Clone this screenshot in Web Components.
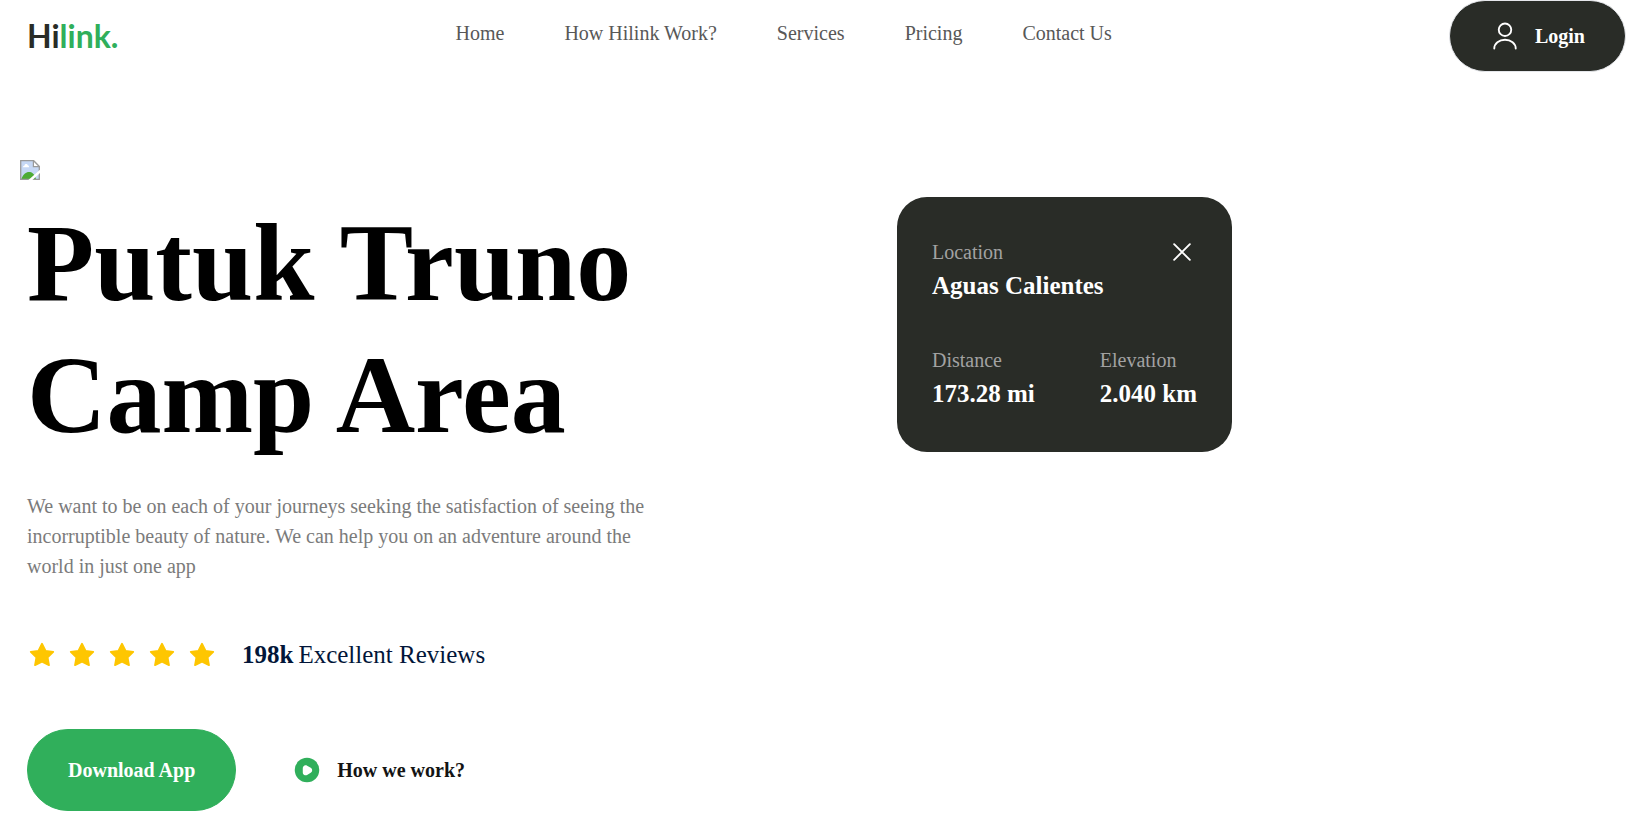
<!DOCTYPE html>
<html lang="en">
<head>
<meta charset="utf-8">
<meta name="viewport" content="width=device-width, initial-scale=1">
<title>Hilink</title>
<style>
  body {
    margin: 0;
    background: #fff;
    font-family: "Liberation Serif", "Times New Roman", serif;
    font-size: 20px;
    line-height: 30px;
  }
</style>
</head>
<body>
<hilink-header></hilink-header>
<hilink-hero></hilink-hero>

<script>
const define = (name, html) => {
  const template = document.createElement('template');
  template.innerHTML = html;
  customElements.define(name, class extends HTMLElement {
    constructor() {
      super();
      this.attachShadow({ mode: 'open' }).append(template.content.cloneNode(true));
    }
  });
};

define('hilink-logo', `
  <style>
    :host { display: block; }
    a {
      display: block;
      color: #292c27;
      font: 700 32px/40px Lato, "Noto Sans", sans-serif;
      text-decoration: none;
    }
    span { color: #30af5b; }
  </style>
  <a href="#">Hi<span>link.</span></a>
`);

define('hilink-button', `
  <style>
    :host { display: block; }
    button {
      display: flex;
      align-items: center;
      gap: 15px;
      margin: 0;
      padding: var(--pad, 25px) 40px;
      border: 1px solid var(--edge, #30af5b);
      border-radius: 50px;
      background: var(--fill, #30af5b);
      color: var(--ink, #fff);
      font: inherit;
      font-weight: 700;
      white-space: nowrap;
      cursor: pointer;
    }
    :host([variant="dark"]) { --pad: 20px; --fill: #292c27; --edge: #e5e7eb; }
    :host([variant="plain"]) { --fill: #fff; --edge: #fff; --ink: #141414; }
    ::slotted(svg) { display: block; width: 30px; height: 30px; }
  </style>
  <button type="button"><slot name="icon"></slot><slot></slot></button>
`);

define('hilink-header', `
  <style>
    :host { display: block; }
    header {
      display: flex;
      align-items: center;
      justify-content: space-between;
      padding: 0 7px 0 27px;
    }
    ul {
      display: flex;
      gap: 60px;
      margin: 0;
      padding: 0 0 6px;
      list-style: none;
    }
    li a { color: #585858; text-decoration: none; white-space: nowrap; }
  </style>
  <header>
    <hilink-logo></hilink-logo>
    <nav>
      <ul>
        <li><a href="#">Home</a></li>
        <li><a href="#">How Hilink Work?</a></li>
        <li><a href="#">Services</a></li>
        <li><a href="#">Pricing</a></li>
        <li><a href="#">Contact Us</a></li>
      </ul>
    </nav>
    <hilink-button variant="dark">
      <svg slot="icon" viewBox="0 0 24 24" fill="none" stroke="#fff" stroke-width="1.5" stroke-linecap="round" stroke-linejoin="round" aria-hidden="true">
        <circle cx="12" cy="7" r="5"/>
        <path d="M20.59 22C20.59 18.13 16.74 15 12 15S3.41 18.13 3.41 22"/>
      </svg>
      Login
    </hilink-button>
  </header>
`);

define('hilink-stat', `
  <style>
    :host { display: block; }
    dl, dd { margin: 0; }
    dt { color: #a2a2a2; }
    dd { color: #fff; font-size: 25px; line-height: 38px; font-weight: 700; white-space: nowrap; }
  </style>
  <dl><dt><slot name="label"></slot></dt><dd><slot></slot></dd></dl>
`);

define('location-card', `
  <style>
    :host {
      display: flex;
      flex-direction: column;
      gap: 40px;
      box-sizing: border-box;
      width: 335px;
      padding: 40px 35px 39px;
      border-radius: 30px;
      background: #292c27;
    }
    .row { display: flex; justify-content: space-between; align-items: flex-start; }
    button { margin: 0; padding: 0; border: 0; background: none; cursor: pointer; }
    svg { display: block; width: 30px; height: 30px; }
  </style>
  <div class="row">
    <hilink-stat><span slot="label">Location</span>Aguas Calientes</hilink-stat>
    <button type="button" aria-label="Close">
      <svg viewBox="0 0 24 24" fill="none" stroke="#fff" stroke-width="1.5" stroke-linecap="round" aria-hidden="true">
        <path d="M5.7 5.7 18.3 18.3M18.3 5.7 5.7 18.3"/>
      </svg>
    </button>
  </div>
  <div class="row">
    <hilink-stat><span slot="label">Distance</span>173.28 mi</hilink-stat>
    <hilink-stat><span slot="label">Elevation</span>2.040 km</hilink-stat>
  </div>
`);

define('star-icon', `
  <style>
    :host { display: block; }
    svg { display: block; width: 30px; height: 30px; }
  </style>
  <svg viewBox="0 0 24 24" fill="#fec601" stroke="#fec601" stroke-width="1.4" stroke-linejoin="round" aria-hidden="true">
    <path d="M12 3 14.8 8.6 21 9.5 16.5 13.9 17.6 20.1 12 17.4 6.4 20.1 7.5 13.9 3 9.5 9.2 8.6Z"/>
  </svg>
`);

define('hilink-reviews', `
  <style>
    :host { display: flex; align-items: center; gap: 25px; }
    .stars { display: flex; gap: 10px; }
    p { display: flex; gap: 5px; margin: 0; color: #021639; font-size: 25px; line-height: 38px; }
  </style>
  <div class="stars" role="img" aria-label="Five stars">
    <star-icon></star-icon><star-icon></star-icon><star-icon></star-icon><star-icon></star-icon><star-icon></star-icon>
  </div>
  <p><b>198k</b><span>Excellent Reviews</span></p>
`);

define('missing-picture', `
  <style>
    :host { display: block; }
    svg { display: block; width: 20px; height: 20px; }
  </style>
  <svg viewBox="0 0 20 20" role="img" aria-label="Picture not available">
    <path d="M.7.7H13.6L19.3 6.4V19.3H.7Z" fill="#c6d8f5"/>
    <path d="M3 7.3C3 5.8 4 5.5 4.5 5.4C4.8 3.6 7.4 3.5 7.8 5.3C9 5.4 9 6.3 9 7.3Z" fill="#fff"/>
    <path d="M1.3 19C3 14.5 6 12 9 12C12 12 14 13.5 16 19Z" fill="#4dab35"/>
    <path d="M.7.7H13.6L19.3 6.4V19.3H.7Z" fill="none" stroke="#9a9a9a" stroke-width="1.3"/>
    <path d="M13.4.7V6.6H19.3Z" fill="#fff" stroke="#9a9a9a" stroke-width="1.2"/>
    <path d="M20 9.8V13L12.4 20H8.4Z" fill="#fff"/>
  </svg>
`);

define('hilink-hero', `
  <style>
    :host { display: block; padding: 88px 7px 0 20px; }
    .columns {
      display: grid;
      grid-template-columns: minmax(0, 870px) 1fr;
      align-items: start;
      padding: 17px 0 0 7px;
    }
    h1 { max-width: 650px; margin: 0; color: #000; font-size: 110px; line-height: 132px; font-weight: 700; }
    p { max-width: 650px; margin: 30px 0 0; color: #7b7b7b; }
    hilink-reviews { margin-top: 55px; }
    .actions { display: flex; gap: 15px; margin-top: 55px; }
  </style>
  <missing-picture></missing-picture>
  <div class="columns">
    <section>
      <h1>Putuk Truno Camp Area</h1>
      <p>We want to be on each of your journeys seeking the satisfaction of seeing the incorruptible beauty of nature. We can help you on an adventure around the world in just one app</p>
      <hilink-reviews></hilink-reviews>
      <div class="actions">
        <hilink-button>Download App</hilink-button>
        <hilink-button variant="plain">
          <svg slot="icon" viewBox="0 0 24 24" aria-hidden="true">
            <circle cx="12" cy="12" r="9.8" fill="#30af5b"/>
            <path fill="#fff" d="M14.97 14.23L12.07 15.9C11.71 16.11 11.31 16.21 10.92 16.21C10.52 16.21 10.13 16.11 9.77 15.9C9.05 15.48 8.62 14.74 8.62 13.9V10.55C8.62 9.72 9.05 8.97 9.77 8.55C10.49 8.13 11.35 8.13 12.08 8.55L14.98 10.22C15.7 10.64 16.13 11.38 16.13 12.22C16.13 13.06 15.7 13.81 14.97 14.23Z"/>
          </svg>
          How we work?
        </hilink-button>
      </div>
    </section>
    <location-card></location-card>
  </div>
`);
</script>
</body>
</html>
